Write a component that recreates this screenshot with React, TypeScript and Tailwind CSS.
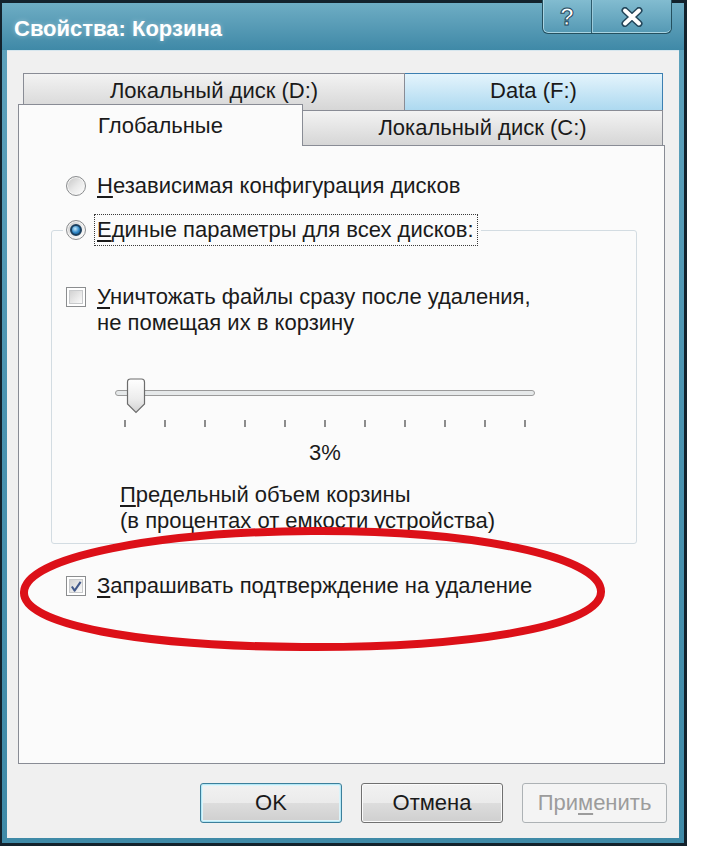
import React from 'react'

function Radio({ checked }: { checked?: boolean }) {
  return (
    <span className="flex h-[20px] w-[20px] shrink-0 items-center justify-center rounded-full border border-[#8b8d8f] bg-linear-to-br from-[#c4c4c4] via-[#e8e8e8] to-[#ffffff] shadow-[inset_0_0_0_1px_#f6f6f6]">
      {checked && (
        <span className="h-[12px] w-[12px] rounded-full border-2 border-[#1b3f5e] bg-[radial-gradient(circle_at_40%_35%,#c6ecff,#2f86c6_55%,#0c4a7e)]" />
      )}
    </span>
  )
}

function Checkbox({ checked }: { checked?: boolean }) {
  return (
    <span className="flex h-[20px] w-[20px] shrink-0 border border-[#8b8d8f] bg-white p-[2px]">
      <span className="flex h-full w-full items-center justify-center border border-[#c8cacc] bg-linear-to-br from-[#d2d2d2] to-[#fbfbfb]">
        {checked && (
          <svg width="13" height="13" viewBox="0 0 13 13">
            <path d="M2 6.5 L5 11 L11.5 1.5" fill="none" stroke="#42598a" strokeWidth="2.2" strokeLinejoin="round" />
          </svg>
        )}
      </span>
    </span>
  )
}

function Thumb() {
  return (
    <svg width="20" height="36" viewBox="0 0 20 36">
      <defs>
        <linearGradient id="thumbFill" x1="0" y1="0" x2="0" y2="1">
          <stop offset="0" stopColor="#ffffff" />
          <stop offset="0.6" stopColor="#ececec" />
          <stop offset="1" stopColor="#d2d2d2" />
        </linearGradient>
      </defs>
      <path d="M1.5 4 Q1.5 1 4.5 1 H15.5 Q18.5 1 18.5 4 V26 L10 34.5 L1.5 26 Z" fill="url(#thumbFill)" stroke="#6c6c6c" strokeWidth="1.2" />
    </svg>
  )
}

const ticks = [0, 1, 2, 3, 4, 5, 6, 7, 8, 9, 10]

export default function App() {
  return (
    <div className="relative h-[846px] w-[706px] overflow-hidden bg-white font-['Liberation_Sans',Arial,sans-serif] text-[22px] leading-[26px] text-[#1a1a1a]">
      {/* window */}
      <div className="flex h-[846px] w-[687px] flex-col border-t-[3px] border-r-[3px] border-b-[3px] border-l-2 border-[#13222c] bg-linear-to-b from-[#5fa3bd] via-[#4a93b0] to-[#3f8aa7]">
        {/* title bar */}
        <div className="flex h-[47px] shrink-0 items-start justify-between bg-linear-to-b from-[#6eadc4] to-[#3f89a7]">
          <span className="ml-[12px] mt-[13px] font-bold text-white [text-shadow:0_0_5px_rgba(255,255,255,0.35)]">
            Свойства: Корзина
          </span>
          <div className="-mt-[3px] mr-[12px] flex h-[34px] w-[130px] overflow-hidden rounded-b-[6px] border border-t-0 border-[#24505f] bg-linear-to-b from-[#82bcd0] to-[#5499b4] shadow-[inset_0_-1px_0_#a9d4e2,inset_1px_0_0_#a9d4e2]">
            <div className="flex w-[49px] items-center justify-center border-r border-[#2c5b6c] shadow-[1px_0_0_#9ccbdb]">
              <span className="text-[24px] font-bold leading-[24px] text-white [-webkit-text-stroke:1px_#23465a]">?</span>
            </div>
            <div className="flex flex-1 items-center justify-center">
              <svg width="24" height="20" viewBox="0 0 24 20">
                <path d="M5 3.5 L19 16.5 M19 3.5 L5 16.5" stroke="#23465a" strokeWidth="7" strokeLinecap="round" />
                <path d="M5 3.5 L19 16.5 M19 3.5 L5 16.5" stroke="#ffffff" strokeWidth="4" strokeLinecap="round" />
              </svg>
            </div>
          </div>
        </div>

        {/* client area */}
        <div className="mx-[5px] mb-[5px] flex flex-1 flex-col bg-[#f0f0f0] pt-[23px] shadow-[inset_0_1px_0_#d6e6ee]">
          {/* back tab row */}
          <div className="ml-[16px] flex h-[37px]">
            <div className="flex w-[382px] items-center justify-center border border-b-0 border-[#898c95] bg-linear-to-b from-[#f3f3f3] to-[#d6d6d6] pb-[2px]">
              Локальный диск (D:)
            </div>
            <div className="flex w-[258px] items-center justify-center border border-b-0 border-l-0 border-[#3c7fb1] bg-linear-to-b from-[#e4f4fc] to-[#add9f0] pb-[2px]">
              Data (F:)
            </div>
          </div>

          {/* front tab row */}
          <div className="relative z-10 ml-[11px] -mt-[6px] flex h-[41px] items-end">
            <div className="relative z-20 -mb-px flex h-[42px] w-[285px] items-start justify-center border border-b-0 border-[#898c95] bg-[#fbfbfb] pt-[8px]">
              Глобальные
            </div>
            <div className="flex h-[35px] w-[360px] items-center justify-center border border-b-0 border-l-0 border-[#898c95] bg-linear-to-b from-[#f3f3f3] to-[#d6d6d6]">
              Локальный диск (C:)
            </div>
          </div>

          {/* tab panel */}
          <div className="ml-[11px] flex h-[619px] w-[647px] flex-col border border-[#898c95] bg-[#fbfbfb]">
            <div className="mt-[27px] flex h-[26px] items-center gap-[11px] pl-[47px]">
              <Radio />
              <span>
                <u className="underline-offset-[3px]">Н</u>езависимая конфигурация дисков
              </span>
            </div>

            <fieldset className="mt-[15px] ml-[32px] w-[586px] rounded-[3px] border border-[#d3dce2] px-[11px] pb-[9px]">
              <legend className="flex h-[32px] items-center gap-[8px] px-[3px]">
                <Radio checked />
                <span className="flex h-[32px] w-[384px] items-center border border-dotted border-[#3a3a3a] pl-[2px]">
                  <span>
                    <u className="underline-offset-[3px]">Е</u>диные параметры для всех дисков:
                  </span>
                </span>
              </legend>

              <div className="mt-[38px] ml-[3px] flex items-start gap-[11px]">
                <span className="mt-[3px]">
                  <Checkbox />
                </span>
                <span>
                  <u className="underline-offset-[3px]">У</u>ничтожать файлы сразу после удаления,
                  <br />
                  не помещая их в корзину
                </span>
              </div>

              <div className="relative mt-[42px] ml-[52px] h-[35px] w-[420px] pt-[12px]">
                <div className="h-[6px] w-[420px] rounded-full border border-[#9b9b9b] bg-[#e6e9ea]" />
                <div className="absolute top-0 left-[11px]">
                  <Thumb />
                </div>
              </div>
              <div className="mt-[7px] ml-[61px] flex h-[7px] w-[402px] justify-between">
                {ticks.map((t) => (
                  <span key={t} className="h-[7px] w-[2px] bg-[#8c8c8c]" />
                ))}
              </div>
              <div className="mt-[13px] ml-[52px] w-[420px] text-center">3%</div>

              <div className="mt-[16px] ml-[57px]">
                <u className="underline-offset-[3px]">П</u>редельный объем корзины
                <br />
                (в процентах от емкости устройства)
              </div>
            </fieldset>

            <div className="mt-[29px] flex h-[26px] items-center gap-[11px] pl-[47px]">
              <Checkbox checked />
              <span>
                <u className="underline-offset-[3px]">З</u>апрашивать подтверждение на удаление
              </span>
            </div>
          </div>

          {/* dialog buttons */}
          <div className="mt-[19px] flex justify-end gap-[19px] pr-[12px]">
            <button className="flex h-[40px] w-[142px] items-center justify-center rounded-[3px] border border-[#3c7f9b] bg-[linear-gradient(#f2f2f2,#ebebeb_49%,#dddddd_50%,#cfcfcf)] shadow-[inset_0_0_0_1px_#b5e8f6,inset_0_0_0_2px_#dcf4fa]">
              OK
            </button>
            <button className="flex h-[40px] w-[142px] items-center justify-center rounded-[3px] border border-[#707070] bg-[linear-gradient(#f2f2f2,#ebebeb_49%,#dddddd_50%,#cfcfcf)] shadow-[inset_0_0_0_1px_#fbfbfb]">
              Отмена
            </button>
            <button className="flex h-[40px] w-[145px] items-center justify-center rounded-[3px] border border-[#adb2b5] bg-[#f4f4f4] text-[#9c9c9c]">
              <span>
                При<u className="underline-offset-[3px]">м</u>енить
              </span>
            </button>
          </div>
        </div>
      </div>

      {/* red marker ellipse drawn over the dialog */}
      <svg className="pointer-events-none absolute top-0 left-0" width="706" height="846" viewBox="0 0 706 846">
        <path
          d="M312 531 C470 530 602 556 601 592 C600 628 460 648 302 647 C140 646 22 625 24 592 C26 556 160 532 312 531 Z"
          fill="none"
          stroke="#dc1018"
          strokeWidth="8"
        />
      </svg>
    </div>
  )
}
